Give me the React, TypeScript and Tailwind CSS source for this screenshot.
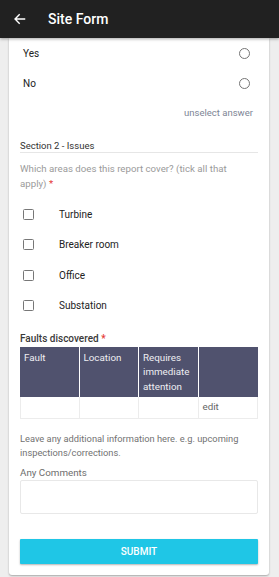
import React from "react";

const font = { fontFamily: "Roboto, 'Noto Sans', Arial, sans-serif" };

function Radio({ label }: { label: string }) {
  return (
    <div className="flex h-[30px] items-center justify-between pl-[3px] pr-[8px]">
      <span className="text-[10px] text-[#222]">{label}</span>
      <span className="h-[11px] w-[11px] rounded-full border-[1.5px] border-[#757575]" />
    </div>
  );
}

function Check({ label }: { label: string }) {
  return (
    <div className="flex h-[30.5px] items-center pl-[3px]">
      <span className="h-[11px] w-[11px] rounded-[1.5px] border-[1.5px] border-[#777]" />
      <span className="ml-[25px] text-[10px] text-[#222]">{label}</span>
    </div>
  );
}

export default function App() {
  return (
    <div style={font} className="h-[577px] w-[279px] overflow-hidden bg-[#eeeeee]">
      <div className="relative z-10 flex h-[38px] items-center bg-[#212121] shadow-[0_1px_3px_rgba(0,0,0,0.35)]">
        <svg className="ml-[13px]" width="14" height="14" viewBox="0 0 24 24" fill="none">
          <path d="M21 12H4M11.5 4L3.5 12L11.5 20" stroke="white" strokeWidth="2.4" />
        </svg>
        <span className="ml-[21px] text-[14px] font-medium text-white">Site Form</span>
      </div>
      <div className="ml-[9px] mr-[10px] h-[537px] rounded-b-[3px] bg-white px-[11px] shadow-[0_1px_2px_rgba(0,0,0,0.3)]">
        <Radio label="Yes" />
        <Radio label="No" />
        <div className="mt-[8px] pr-[5px] text-right text-[9.5px] leading-[14px] text-[#7d8595]">unselect answer</div>
        <div className="mt-[19px] h-[14px] border-b border-[#e6e6e6] text-[9.5px] leading-[13px] text-[#333]">
          Section 2 - Issues
        </div>
        <div className="mt-[8px] max-w-[215px] text-[9.7px] leading-[15px] text-[#9a9a9a]">
          Which areas does this report cover? (tick all that apply) <span className="text-[#e53935]">*</span>
        </div>
        <div className="mt-[8px]">
          <Check label="Turbine" />
          <Check label="Breaker room" />
          <Check label="Office" />
          <Check label="Substation" />
        </div>
        <div className="mt-[11px] text-[10px] font-medium leading-[14px] text-[#3a3a3a]">
          Faults discovered <span className="text-[#e53935]">*</span>
        </div>
        <div className="mt-[1px] grid w-[238px] grid-cols-4 text-[9.8px] leading-[14.3px]">
          <div className="h-[50px] border-r border-white bg-[#50526e] px-[4px] pt-[4px] text-[#eeeef2]">Fault</div>
          <div className="h-[50px] border-r border-white bg-[#50526e] px-[4px] pt-[4px] text-[#eeeef2]">Location</div>
          <div className="h-[50px] border-r border-white bg-[#50526e] px-[4px] pt-[4px] text-[#eeeef2]">Requires immediate attention</div>
          <div className="h-[50px] bg-[#50526e]" />
          <div className="h-[22px] border-b border-l border-r border-[#ececec]" />
          <div className="h-[22px] border-b border-r border-[#ececec]" />
          <div className="h-[22px] border-b border-r border-[#ececec]" />
          <div className="flex h-[22px] items-center border-b border-r border-[#ececec] px-[4px] text-[#666]">edit</div>
        </div>
        <div className="mt-[13px] text-[9.3px] leading-[14px] text-[#727272]">
          Leave any additional information here. e.g. upcoming inspections/corrections.
        </div>
        <div className="mt-[6px] text-[9.8px] leading-[13px] text-[#6e6e6e]">Any Comments</div>
        <div className="mt-[1px] h-[34px] rounded-[2px] border border-[#e8e8e8]" />
        <button className="mt-[25px] flex h-[25px] w-full items-center justify-center rounded-[1px] bg-[#1fc6e6] text-[10px] font-medium text-white shadow-[0_1px_2px_rgba(0,0,0,0.3)]">
          SUBMIT
        </button>
      </div>
    </div>
  );
}
